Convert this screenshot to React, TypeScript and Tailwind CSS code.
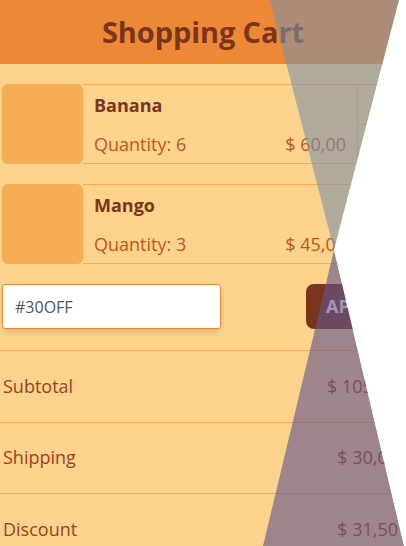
import React from "react";

interface CartItem {
  name: string;
  quantity: number;
  price: string;
}

const items: CartItem[] = [
  { name: "Banana", quantity: 6, price: "$ 60,00" },
  { name: "Mango", quantity: 3, price: "$ 45,00" },
];

const summary = [
  { label: "Subtotal", value: "$ 105,00" },
  { label: "Shipping", value: "$ 30,00" },
  { label: "Discount", value: "$ 31,50" },
];

function Overlay() {
  return (
    <svg
      className="pointer-events-none absolute left-0 top-0"
      width="406"
      height="546"
      viewBox="0 0 406 546"
    >
      <polygon points="270,0 399,0 334,250" fill="rgba(127,143,166,0.6)" />
      <polygon points="334,250 263,546 404,546" fill="rgba(100,86,140,0.62)" />
      <polygon points="399,0 406,0 406,546 404,546 334,250" fill="#ffffff" />
    </svg>
  );
}

export default function App() {
  return (
    <div
      className="relative w-[406px] h-[546px] overflow-hidden bg-[#fbd38d]"
      style={{ fontFamily: '"Open Sans", "Noto Sans", sans-serif' }}
    >
      <header className="h-16 bg-[#ed8936] flex items-center justify-center">
        <h1 className="text-[29px] font-bold text-[#7b341e] tracking-[-0.1px]">
          Shopping Cart
        </h1>
      </header>

      <div className="pt-5 flex flex-col gap-5">
        {items.map((item) => (
          <div key={item.name} className="flex h-[80px]">
            <div className="ml-0.5 w-[81px] h-full rounded-md bg-[#f6ad55]" />
            <div className="flex-1 flex flex-col justify-between border-y border-[#f6ad55] px-[11px] pt-[7px] pb-[5px]">
              <h2 className="text-[18px] font-bold text-[#7b341e]">{item.name}</h2>
              <div className="flex justify-between text-[18px] text-[#c05621]">
                <p>Quantity: {item.quantity}</p>
                <p>{item.price}</p>
              </div>
            </div>
            <div className="w-[49px] flex flex-col border border-r-0 border-[#f6ad55]">
              <div className="flex-1 border-b border-[#f6ad55]" />
              <div className="flex-1" />
            </div>
          </div>
        ))}

        <div className="flex items-center justify-between pl-0.5">
          <input
            className="w-[219px] h-[45px] bg-white border border-[#ed8936] rounded-[3px] px-3 text-[16px] text-[#4a5568] shadow-md outline-none"
            defaultValue="#30OFF"
          />
          <button className="w-[100px] h-[45px] rounded-lg bg-[#7b341e] text-left pl-5 text-[18px] font-bold text-white">
            APPLY
          </button>
        </div>
      </div>

      <div className="mt-[21px] flex flex-col">
        {summary.map((row) => (
          <div
            key={row.label}
            className="h-[71.5px] border-t border-[#f6ad55] flex items-center justify-between pl-[3px] pr-2 text-[18px] text-[#9c4221]"
          >
            <span>{row.label}</span>
            <span>{row.value}</span>
          </div>
        ))}
      </div>

      <Overlay />
    </div>
  );
}
